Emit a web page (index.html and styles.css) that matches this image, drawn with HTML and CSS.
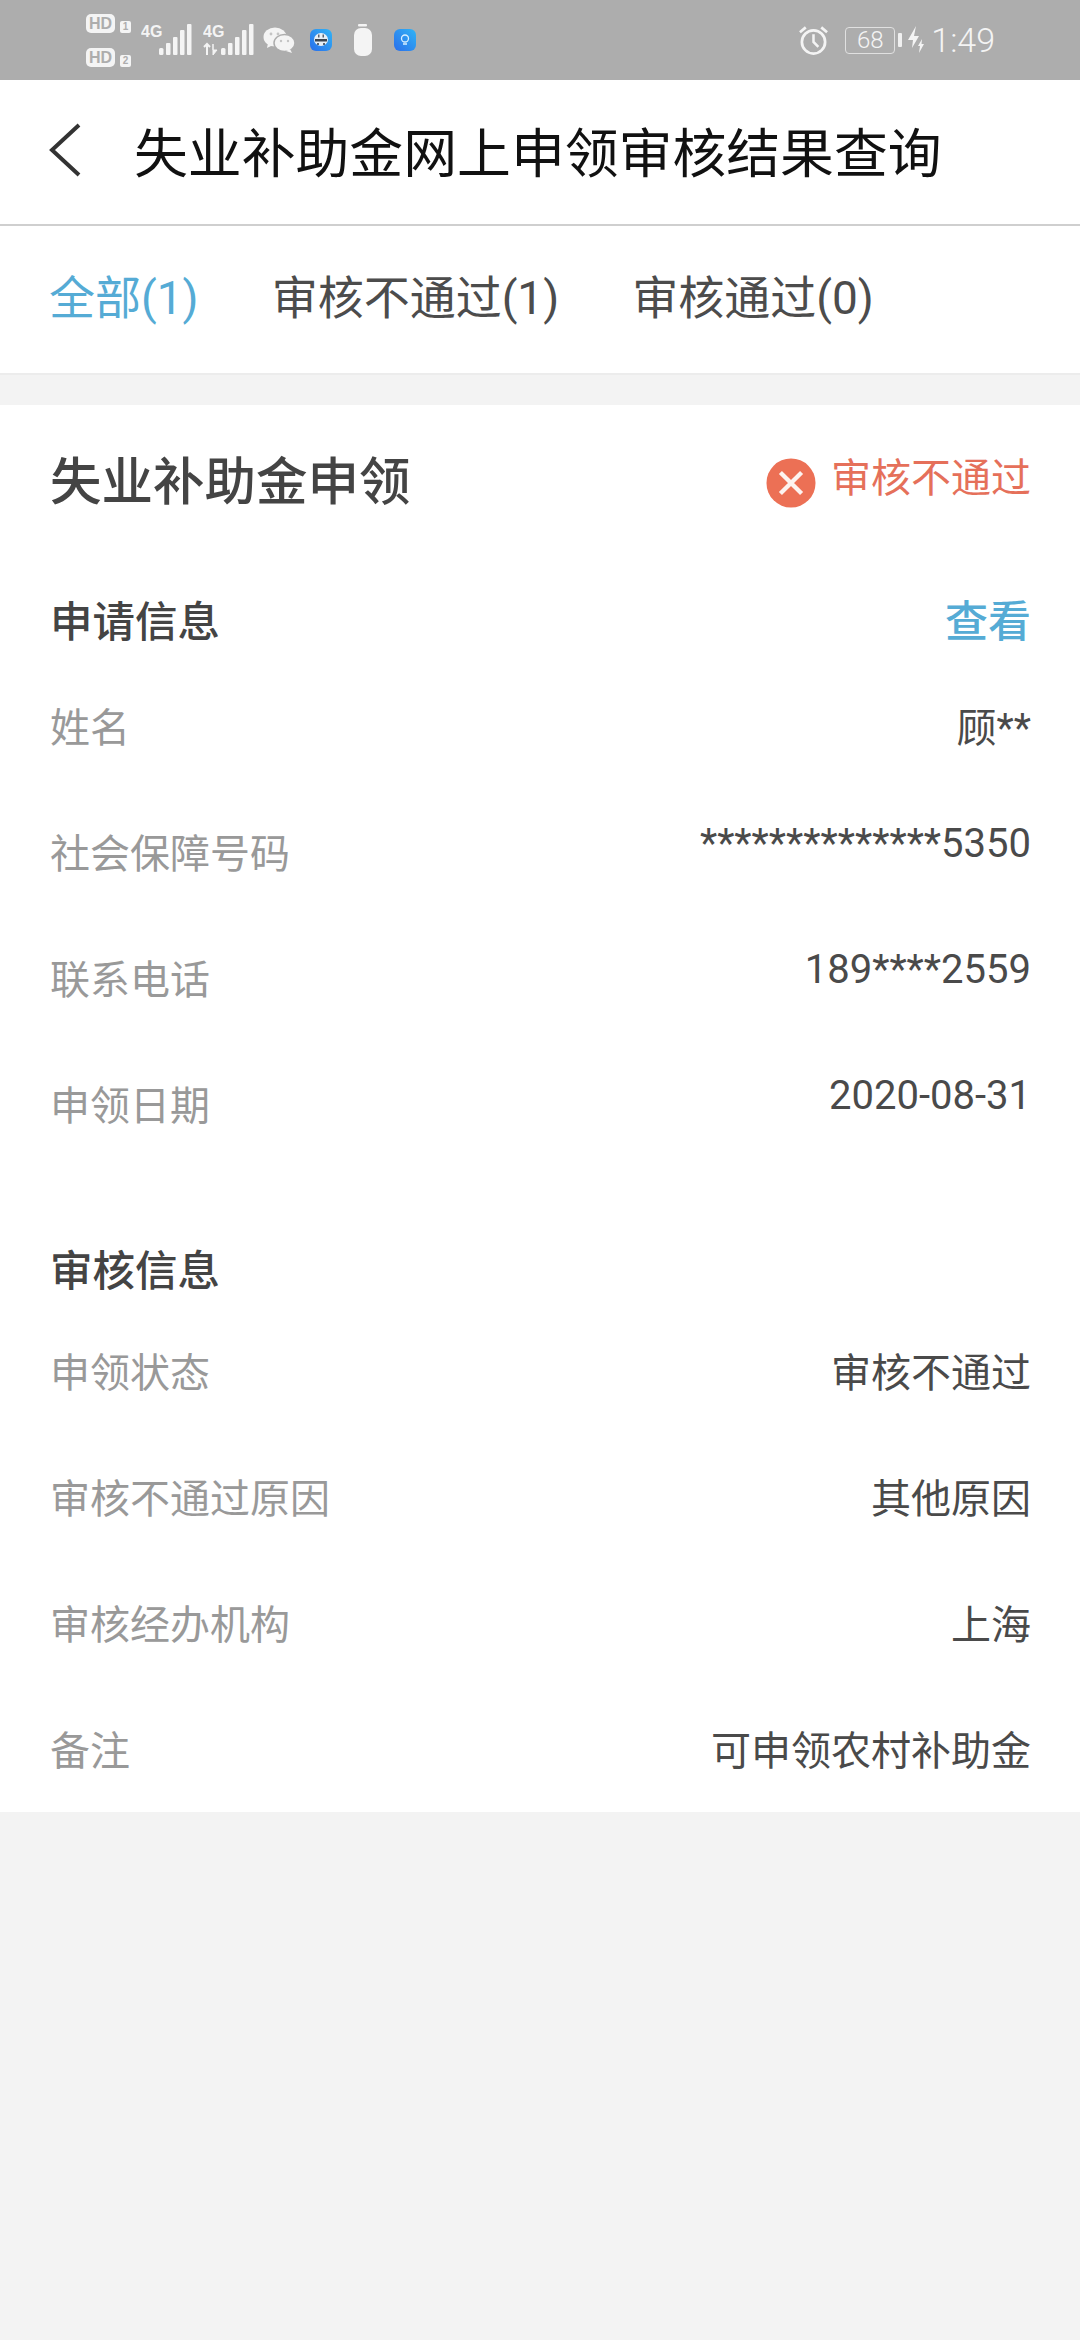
FILE: index.html
```html
<!DOCTYPE html>
<html lang="zh-CN">
<head>
  <meta charset="UTF-8" />
  <meta name="viewport" content="width=device-width, initial-scale=1.0" />
  <title>失业补助金网上申领审核结果查询</title>
  <link rel="stylesheet" href="styles.css">
</head>
<body>
  <div class="statusbar">
    <div class="status-left">
      <div class="hd-stack">
        <div class="hd"><span class="hd-box">HD</span><span class="hd-num">1</span></div>
        <div class="hd"><span class="hd-box">HD</span><span class="hd-num">2</span></div>
      </div>
      <svg class="signal" width="62" height="34" viewBox="0 0 62 34">
        <text x="0" y="14" class="net">4G</text>
        <g fill="#f4f4f4"><rect x="18" y="25" width="4.500" height="7" rx="1.500"/><rect x="25" y="20" width="4.500" height="12" rx="1"/><rect x="32" y="14" width="4.500" height="18" rx="1"/><rect x="39" y="7" width="4.500" height="25" rx="1"/><rect x="46" y="1" width="4.500" height="31" rx="1"/></g>
      </svg>
      <svg class="signal" width="62" height="34" viewBox="0 0 62 34">
        <text x="0" y="14" class="net">4G</text>
        <path d="M4 32V21M1 24l3-3 3 3" stroke="#f4f4f4" stroke-width="2" fill="none"/>
        <path d="M10 21v11l4-5h-4z" fill="#f4f4f4" stroke="#f4f4f4" stroke-width="1"/>
        <g fill="#f4f4f4"><rect x="18" y="25" width="4.500" height="7" rx="1.500"/><rect x="25" y="20" width="4.500" height="12" rx="1"/><rect x="32" y="14" width="4.500" height="18" rx="1"/><rect x="39" y="7" width="4.500" height="25" rx="1"/><rect x="46" y="1" width="4.500" height="31" rx="1"/></g>
      </svg>
      <svg class="wechat" width="32" height="26" viewBox="0 0 32 26">
        <ellipse cx="12" cy="10" rx="11.500" ry="9.500" fill="#f4f4f4"/>
        <path d="M5 16l-1 5 6-3z" fill="#f4f4f4"/>
        <ellipse cx="21.500" cy="16" rx="10.500" ry="8.500" fill="#f4f4f4" stroke="#adadad" stroke-width="1.500"/>
        <path d="M27 22l2 4-6-2z" fill="#f4f4f4"/>
        <g fill="#c4c4c4"><circle cx="8" cy="7" r="1.400"/><circle cx="15" cy="7" r="1.400"/><circle cx="18" cy="14" r="1.200"/><circle cx="25" cy="14" r="1.200"/></g>
      </svg>
      <svg class="app-a" width="22" height="22" viewBox="0 0 22 22">
        <defs>
          <linearGradient id="appBlue" x1="1" y1="0" x2="0" y2="1">
            <stop offset="0" stop-color="#30b4f6"/>
            <stop offset="1" stop-color="#2a6eea"/>
          </linearGradient>
        </defs>
        <rect width="22" height="22" rx="6" fill="url(#appBlue)"/>
        <ellipse cx="11" cy="10.500" rx="7" ry="6.500" fill="#e8eef4"/>
        <rect x="5" y="10" width="12" height="2.500" fill="#3a4450"/>
        <path d="M8 5.500h1.500v3H8zM12.500 5.500H14v3h-1.500zM7 14h2v2H7zM13 14h2v2h-2z" fill="#5a6470"/>
      </svg>
      <svg class="bottle" width="20" height="32" viewBox="0 0 20 32">
        <rect x="5" y="0" width="9" height="2.500" rx="1" fill="#f4f4f4"/>
        <rect x="1" y="4" width="18" height="28" rx="7" fill="#f4f4f4"/>
      </svg>
      <svg class="app-b" width="22" height="22" viewBox="0 0 22 22">
        <rect width="22" height="22" rx="6" fill="url(#appBlue)"/>
        <circle cx="11" cy="9.500" r="3.500" fill="none" stroke="#d8f0ff" stroke-width="1.300"/>
        <path d="M9 15h4" stroke="#d8f0ff" stroke-width="1.500"/>
      </svg>
    </div>
    <div class="status-right">
      <svg class="alarm" width="31" height="32" viewBox="0 0 32 32" fill="none" stroke="#f4f4f4">
        <circle cx="16" cy="18" r="12" stroke-width="2.800"/>
        <path d="M16 10v8l5 5" stroke-width="2.600"/>
        <path d="M2 8l6-5M30 8l-6-5" stroke-width="2.800"/>
      </svg>
      <div class="battery"><span class="battery-body">68</span><span class="battery-tip"></span></div>
      <svg class="bolt" width="18" height="28" viewBox="0 0 18 28">
        <path d="M9 0L1 14h5l-1 8 7-12H7z M15 13l-4 7h2l-1 7 5-9h-2.500z" fill="#f4f4f4"/>
      </svg>
      <span class="clock">1:49</span>
    </div>
  </div>

  <div class="navbar">
    <svg class="back" width="32" height="54" viewBox="0 0 32 54">
      <path d="M30 2L3 27l27 25" fill="none" stroke="#333" stroke-width="4"/>
    </svg>
    <h1 class="nav-title">失业补助金网上申领审核结果查询</h1>
  </div>

  <div class="tabs">
    <span class="tab active">全部(1)</span>
    <span class="tab">审核不通过(1)</span>
    <span class="tab">审核通过(0)</span>
  </div>

  <div class="card">
    <div class="card-head">
      <h2 class="card-title">失业补助金申领</h2>
      <div class="result">
        <svg width="50" height="50" viewBox="0 0 52 52">
          <circle cx="26" cy="26" r="25.500" fill="#ec7055"/>
          <path d="M15 15l22 22M37 15L15 37" stroke="#fdf3f0" stroke-width="4.500"/>
        </svg>
        <span class="result-text">审核不通过</span>
      </div>
    </div>

    <div class="section-head">
      <h3>申请信息</h3>
      <a class="view-link">查看</a>
    </div>
    <div class="row"><span class="label">姓名</span><span class="value">顾**</span></div>
    <div class="row"><span class="label">社会保障号码</span><span class="value num">**************5350</span></div>
    <div class="row"><span class="label">联系电话</span><span class="value num">189****2559</span></div>
    <div class="row"><span class="label">申领日期</span><span class="value num">2020-08-31</span></div>

    <div class="section-head second">
      <h3>审核信息</h3>
    </div>
    <div class="row"><span class="label">申领状态</span><span class="value">审核不通过</span></div>
    <div class="row"><span class="label">审核不通过原因</span><span class="value">其他原因</span></div>
    <div class="row"><span class="label">审核经办机构</span><span class="value">上海</span></div>
    <div class="row"><span class="label">备注</span><span class="value">可申领农村补助金</span></div>
  </div>
</body>
</html>
```

FILE: styles.css
```css
* {
  box-sizing: border-box;
}
body {
  margin: 0;
  height: 2340px;
  background: #f3f3f3;
  font-family: Roboto, "Noto Sans CJK SC", sans-serif;
  overflow: hidden;
}
h1, h2, h3 {
  margin: 0;
}

/* status bar */
.statusbar {
  height: 80px;
  background: #adadad;
  display: flex;
  justify-content: space-between;
  align-items: center;
  color: #f4f4f4;
  padding: 0 85px 0 86px;
}
.status-left, .status-right {
  display: flex;
  align-items: center;
}
.hd-stack {
  display: flex;
  flex-direction: column;
  gap: 15px;
  margin-right: 10px;
}
.hd {
  display: flex;
  align-items: flex-end;
  gap: 5px;
}
.hd-box {
  background: #f4f4f4;
  color: #adadad;
  font: bold 16px/19px "Liberation Sans", sans-serif;
  border-radius: 5px;
  width: 29px;
  text-align: center;
}
.hd-num {
  background: #f4f4f4;
  color: #adadad;
  font: bold 10px/12px "Liberation Sans", sans-serif;
  width: 11px;
  text-align: center;
  border-radius: 2px;
}
.net {
  font: bold 16px "Liberation Sans", sans-serif;
  fill: #f4f4f4;
}
.wechat {
  margin-left: -2px;
}
.app-a {
  margin-left: 15px;
}
.bottle {
  margin-left: 21px;
}
.app-b {
  margin-left: 21px;
}
.alarm {
  margin-right: 16px;
}
.battery {
  display: flex;
  align-items: center;
  gap: 3px;
  margin-right: 5px;
}
.battery-body {
  width: 50px;
  height: 27px;
  border: 1.5px solid #e0e0e0;
  border-radius: 4px;
  font-size: 24px;
  font-weight: 300;
  line-height: 24px;
  text-align: center;
  color: #f4f4f4;
}
.battery-tip {
  width: 4px;
  height: 14px;
  background: #f0f0f0;
  border-radius: 1px;
}
.bolt {
  margin-right: 6px;
}
.clock {
  font-size: 34px;
  font-weight: 300;
  color: #f4f4f4;
}

/* nav */
.navbar {
  height: 146px;
  background: #fff;
  border-bottom: 2px solid #cfcfcf;
  display: flex;
  align-items: center;
  padding: 0 0 4px 49px;
}
.back {
  margin-right: 53px;
}
.nav-title {
  font-size: 53.85px;
  font-weight: 400;
  color: #111;
  white-space: nowrap;
}

/* tabs */
.tabs {
  height: 149px;
  background: #fff;
  display: flex;
  align-items: center;
  gap: 73px;
  padding: 0 49px 12px;
  border-bottom: 2px solid #ececec;
}
.tab {
  font-size: 46px;
  color: #4c4c4c;
}
.tab.active {
  color: #55abd5;
}

/* card */
.card {
  margin-top: 30px;
  height: 1407px;
  background: #fff;
  padding: 0 49px 0 50px;
}
.card-head {
  height: 171px;
  padding-bottom: 26px;
  display: flex;
  justify-content: space-between;
  align-items: center;
}
.card-title {
  font-size: 51.5px;
  font-weight: 500;
  color: #444;
}
.result {
  display: flex;
  align-items: center;
  gap: 15px;
  margin-top: 10px;
  color: #e5705a;
  font-size: 40px;
}
.result-text {
  line-height: 40px;
  margin-bottom: 8px;
}
.section-head {
  height: 90px;
  padding-bottom: 6px;
  display: flex;
  justify-content: space-between;
  align-items: center;
}
.section-head.second {
  height: 88px;
  margin-top: 53px;
  padding-bottom: 0;
}
.section-head h3 {
  font-size: 42.5px;
  font-weight: 500;
  color: #444;
}
.view-link {
  font-size: 43px;
  font-weight: 500;
  color: #55abd5;
}
.row {
  height: 126px;
  display: flex;
  justify-content: space-between;
  align-items: flex-start;
  padding-top: 34px;
  font-size: 40px;
  line-height: 58px;
}
.label {
  color: #999;
}
.value {
  color: #4a4a4a;
}
.value.num {
  margin-top: -11px;
}
```
